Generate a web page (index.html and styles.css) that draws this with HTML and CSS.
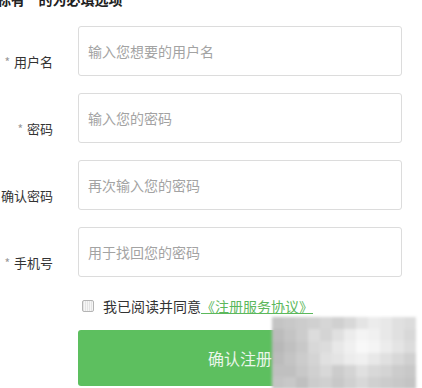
FILE: index.html
```html
<!DOCTYPE html>
<html lang="zh-CN">
<head>
    <meta charset="UTF-8">
    <meta name="viewport" content="width=device-width, initial-scale=1.0">
    <title>用户注册</title>
    <link rel="stylesheet" href="styles.css">
</head>
<body>

    <div class="tips">标有 * 的为必填选项</div>

    <form class="register-form">
        <div class="form-row">
            <label class="form-label" for="username"><span class="star">*</span>用户名</label>
            <input class="form-input" type="text" id="username" placeholder="输入您想要的用户名">
        </div>
        <div class="form-row">
            <label class="form-label" for="password"><span class="star">*</span>密码</label>
            <input class="form-input" type="password" id="password" placeholder="输入您的密码">
        </div>
        <div class="form-row">
            <label class="form-label" for="password2">确认密码</label>
            <input class="form-input" type="password" id="password2" placeholder="再次输入您的密码">
        </div>
        <div class="form-row">
            <label class="form-label" for="phone"><span class="star">*</span>手机号</label>
            <input class="form-input" type="text" id="phone" placeholder="用于找回您的密码">
        </div>

        <div class="agree-row">
            <input class="agree-check" type="checkbox" id="agree">
            <label for="agree">我已阅读并同意</label><a class="agree-link" href="#"> 《注册服务协议》</a>
        </div>

        <button class="submit-button" type="button">确认注册</button>
    </form>

    <div class="watermark" id="watermark"></div>

    <script>
        const shades = [
            'c4','c8','cc','d0','d6','d0','d8','e4','ec','e8','e0','dc',
            'bc','c4','cc','dc','d4','e0','ec','f4','f0','e8','e0','d8',
            'b8','c0','c8','d8','dc','e8','f0','f8','f4','ec','e4','dc',
            'bc','c4','cc','d4','e0','e4','ec','f0','e8','e0','d8','d0',
            'c0','c0','c8','d0','d8','cc','d4','e0','d8','d4','cc','c8',
            'c4','c8','c0','cc','d0','c8','d0','d8','d0','cc','c8','c4'
        ];
        const watermark = document.getElementById('watermark');
        for (let i = 0; i < shades.length; i++) {
            const cell = document.createElement('div');
            cell.className = 'cell';
            cell.style.backgroundColor = '#' + shades[i] + shades[i] + shades[i];
            watermark.appendChild(cell);
        }
    </script>
</body>
</html>
```

FILE: styles.css
```css
body {
    font-family: "Noto Sans CJK SC", "Liberation Sans", sans-serif;
    margin: 0;
    background-color: #fff;
    color: #333;
    position: relative;
    height: 388px;
    overflow: hidden;
}
.tips {
    margin: -11px 0 17px -3px;
    font-size: 14px;
    font-weight: bold;
    line-height: 20px;
    color: #222;
    white-space: nowrap;
}
.form-row {
    display: flex;
    margin-bottom: 17px;
}
.form-label {
    display: flex;
    justify-content: flex-end;
    width: 53px;
    margin-right: 25px;
    padding-top: 27px;
    font-size: 13px;
    line-height: 18px;
    white-space: nowrap;
}
.star {
    color: #999;
    font-size: 12px;
    margin-right: 4px;
}
.form-input {
    box-sizing: border-box;
    width: 324px;
    height: 50px;
    padding: 0 9px;
    border: 1px solid #dcdcdc;
    border-radius: 3px;
    font-family: inherit;
    font-size: 14px;
    color: #333;
    outline: none;
}
.form-input::placeholder {
    color: #a3a3a3;
}
.agree-row {
    display: flex;
    align-items: center;
    height: 24px;
    padding-left: 82px;
    font-size: 14px;
    color: #333;
    white-space: nowrap;
}
.agree-check {
    appearance: none;
    width: 12px;
    height: 12px;
    margin: 0 9px 0 0;
    border: 1px solid #b4b4b4;
    border-radius: 2px;
    background: repeating-linear-gradient(90deg, #e4e4e4 0 1px, #f6f6f6 1px 2px);
}
.agree-link {
    color: #5cb85c;
    text-decoration: underline;
}
.submit-button {
    display: block;
    width: 324px;
    height: 56px;
    margin: 12px 0 0 78px;
    border: none;
    border-radius: 3px;
    background-color: #5dbf5f;
    color: #eaf6ea;
    font-family: inherit;
    font-size: 16px;
    cursor: pointer;
}
.watermark {
    position: absolute;
    top: 317px;
    left: 272px;
    width: 144px;
    height: 72px;
    display: grid;
    grid-template-columns: repeat(12, 12px);
    grid-template-rows: repeat(6, 12px);
    filter: blur(1.5px);
}
```
